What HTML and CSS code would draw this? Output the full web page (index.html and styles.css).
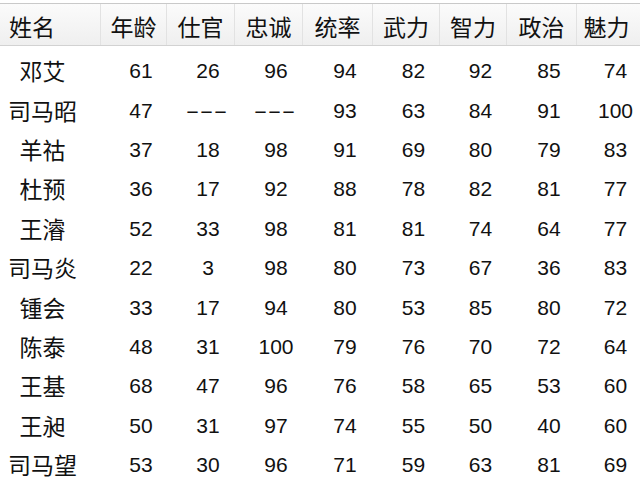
FILE: index.html
```html
<!DOCTYPE html>
<html lang="zh">
<head>
<meta charset="utf-8">
<link rel="stylesheet" href="styles.css">
</head>
<body>
<div class="sheet">
  <div class="head">
    <div class="hc first">姓名</div>
    <div class="hc">年龄</div>
    <div class="hc">仕官</div>
    <div class="hc">忠诚</div>
    <div class="hc">统率</div>
    <div class="hc">武力</div>
    <div class="hc">智力</div>
    <div class="hc">政治</div>
    <div class="hc last">魅力</div>
  </div>
  <div class="body">
    <div class="name">邓艾</div><div class="n">61</div><div class="n">26</div><div class="n">96</div><div class="n">94</div><div class="n">82</div><div class="n">92</div><div class="n">85</div><div class="n">74</div>
    <div class="name">司马昭</div><div class="n">47</div><div class="n"><span class="dash">---</span></div><div class="n"><span class="dash">---</span></div><div class="n">93</div><div class="n">63</div><div class="n">84</div><div class="n">91</div><div class="n">100</div>
    <div class="name">羊祜</div><div class="n">37</div><div class="n">18</div><div class="n">98</div><div class="n">91</div><div class="n">69</div><div class="n">80</div><div class="n">79</div><div class="n">83</div>
    <div class="name">杜预</div><div class="n">36</div><div class="n">17</div><div class="n">92</div><div class="n">88</div><div class="n">78</div><div class="n">82</div><div class="n">81</div><div class="n">77</div>
    <div class="name">王濬</div><div class="n">52</div><div class="n">33</div><div class="n">98</div><div class="n">81</div><div class="n">81</div><div class="n">74</div><div class="n">64</div><div class="n">77</div>
    <div class="name">司马炎</div><div class="n">22</div><div class="n">3</div><div class="n">98</div><div class="n">80</div><div class="n">73</div><div class="n">67</div><div class="n">36</div><div class="n">83</div>
    <div class="name">锺会</div><div class="n">33</div><div class="n">17</div><div class="n">94</div><div class="n">80</div><div class="n">53</div><div class="n">85</div><div class="n">80</div><div class="n">72</div>
    <div class="name">陈泰</div><div class="n">48</div><div class="n">31</div><div class="n">100</div><div class="n">79</div><div class="n">76</div><div class="n">70</div><div class="n">72</div><div class="n">64</div>
    <div class="name">王基</div><div class="n">68</div><div class="n">47</div><div class="n">96</div><div class="n">76</div><div class="n">58</div><div class="n">65</div><div class="n">53</div><div class="n">60</div>
    <div class="name">王昶</div><div class="n">50</div><div class="n">31</div><div class="n">97</div><div class="n">74</div><div class="n">55</div><div class="n">50</div><div class="n">40</div><div class="n">60</div>
    <div class="name">司马望</div><div class="n">53</div><div class="n">30</div><div class="n">96</div><div class="n">71</div><div class="n">59</div><div class="n">63</div><div class="n">81</div><div class="n">69</div>
  </div>
</div>
</body>
</html>
```
FILE: styles.css
```css
html, body {
  margin: 0;
  padding: 0;
  background: #ffffff;
}
body {
  width: 640px;
  height: 486px;
  overflow: hidden;
  color: #111111;
  font-family: "Noto Sans CJK SC", "Noto Sans", sans-serif;
}
.sheet {
  padding-top: 3px;
}
.head, .body {
  display: grid;
  grid-template-columns: 101px 66px 68px 68px 70px 67px 67px 70px 63px;
}
.head {
  border-top: 1px solid #c9c9c9;
  border-bottom: 1px solid #d2d2d2;
  background: linear-gradient(#fbfbfb, #efefef);
  height: 41px;
}
.hc {
  display: flex;
  align-items: center;
  justify-content: center;
  padding-top: 4px;
  font-size: 23px;
  line-height: 1;
  border-right: 1px solid #e2e2e2;
}
.hc.first {
  justify-content: flex-start;
  padding-left: 9px;
}
.hc.last {
  border-right: none;
  padding-right: 4px;
}
.body {
  padding-top: 5px;
  grid-auto-rows: 39.4px;
}
.name {
  display: flex;
  align-items: center;
  justify-content: center;
  padding-right: 16px;
  font-size: 23px;
  line-height: 1;
}
.n {
  display: flex;
  align-items: center;
  justify-content: center;
  padding-left: 14px;
  font-family: "Liberation Sans", Arial, sans-serif;
  font-size: 21px;
  line-height: 1;
}
.dash {
  display: inline-block;
  transform: scaleX(2);
  margin-left: -4px;
}
```
